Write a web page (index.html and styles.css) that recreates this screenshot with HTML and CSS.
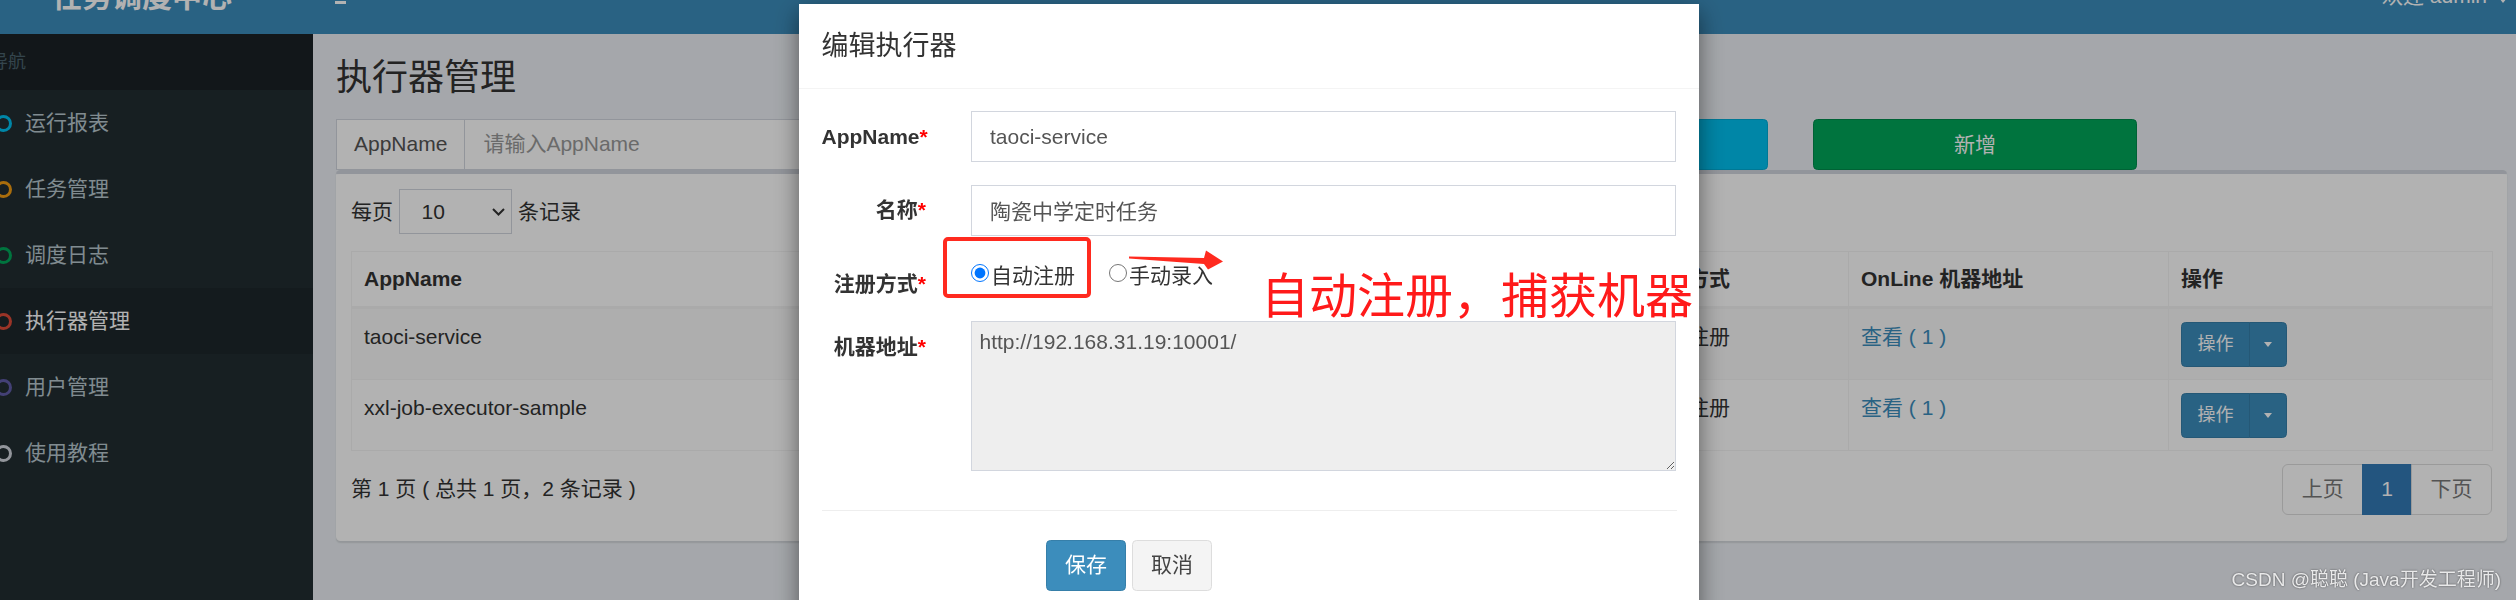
FILE: index.html
```html
<!DOCTYPE html>
<html lang="zh-CN">
<head>
<meta charset="utf-8">
<title>执行器管理</title>
<link rel="stylesheet" href="styles.css">
</head>
<body>
<div class="wrapper">
  <header class="main-header">
    <div class="logo"><span class="logo-text">任务调度中心</span></div>
    <nav class="navbar">
      <span class="toggle"><i></i><i></i><i></i></span>
      <span class="user">欢迎 admin<span class="caret user-caret"></span></span>
    </nav>
  </header>
  <div class="main">
    <aside class="sidebar">
      <div class="sidebar-header"><span>导航</span></div>
      <ul class="menu">
        <li><a><span class="ico aqua"></span><span class="menu-text">运行报表</span></a></li>
        <li><a><span class="ico yellow"></span><span class="menu-text">任务管理</span></a></li>
        <li><a><span class="ico green"></span><span class="menu-text">调度日志</span></a></li>
        <li class="active"><a><span class="ico red"></span><span class="menu-text">执行器管理</span></a></li>
        <li><a><span class="ico purple"></span><span class="menu-text">用户管理</span></a></li>
        <li><a><span class="ico gray"></span><span class="menu-text">使用教程</span></a></li>
      </ul>
    </aside>
    <section class="content">
      <h1 class="page-title">执行器管理</h1>
      <div class="toolbar">
        <div class="input-group"><span class="addon">AppName</span><span class="field">请输入AppName</span></div>
        <div class="input-group"><span class="addon">名称</span><span class="field">请输入名称</span></div>
        <span class="btn-wide btn-info">搜索</span>
        <span class="btn-wide btn-success">新增</span>
      </div>
      <div class="box">
        <div class="box-body">
          <div class="length">
            <span>每页</span>
            <div class="select"><span>10</span><svg class="chev" width="13" height="8" viewBox="0 0 13 8"><path d="M1 1l5.5 5.5L12 1" fill="none" stroke="#333" stroke-width="2"/></svg></div>
            <span>条记录</span>
          </div>
          <table class="table">
            <thead>
              <tr><th class="c-app">AppName</th><th class="c-name">名称</th><th class="c-type">注册方式</th><th class="c-online">OnLine 机器地址</th><th class="c-op">操作</th></tr>
            </thead>
            <tbody>
              <tr>
                <td>taoci-service</td><td>陶瓷中学定时任务</td><td>自动注册</td><td><a class="link">查看 ( 1 )</a></td>
                <td><div class="btn-group"><span class="btn-op">操作</span><span class="btn-drop"><span class="caret"></span></span></div></td>
              </tr>
              <tr>
                <td>xxl-job-executor-sample</td><td>示例执行器</td><td>自动注册</td><td><a class="link">查看 ( 1 )</a></td>
                <td><div class="btn-group"><span class="btn-op">操作</span><span class="btn-drop"><span class="caret"></span></span></div></td>
              </tr>
            </tbody>
          </table>
          <div class="table-foot">
            <span class="info">第 1 页 ( 总共 1 页，2 条记录 )</span>
            <ul class="pagination">
              <li>上页</li>
              <li class="active">1</li>
              <li>下页</li>
            </ul>
          </div>
        </div>
      </div>
    </section>
  </div>
</div>

<div class="backdrop"></div>

<div class="modal">
  <div class="modal-header"><h4 class="modal-title">编辑执行器</h4></div>
  <div class="modal-body">
    <div class="form-group">
      <label class="form-label">AppName<span class="req">*</span></label>
      <input class="form-control" type="text" value="taoci-service">
    </div>
    <div class="form-group">
      <label class="form-label">名称<span class="req">*</span></label>
      <input class="form-control" type="text" value="陶瓷中学定时任务">
    </div>
    <div class="form-group radio-row">
      <label class="form-label">注册方式<span class="req">*</span></label>
      <div class="radios">
        <label class="radio"><input type="radio" name="addressType" checked><span>自动注册</span></label>
        <label class="radio second"><input type="radio" name="addressType"><span>手动录入</span></label>
      </div>
    </div>
    <div class="form-group">
      <label class="form-label">机器地址<span class="req">*</span></label>
      <textarea class="form-area" readonly>http://192.168.31.19:10001/</textarea>
    </div>
    <hr class="divider">
    <div class="actions">
      <button class="btn btn-primary" type="button">保存</button>
      <button class="btn btn-default" type="button">取消</button>
    </div>
  </div>
  <div class="mark-box"></div>
  <svg class="mark-arrow" width="104" height="26" viewBox="0 0 104 26"><polygon points="4,8.5 79,10 81,2.5 98,13.5 83,21.5 79,16 4,10.5" fill="#ff2a1f"/></svg>
  <div class="mark-text">自动注册，捕获机器</div>
</div>

<div class="watermark">CSDN @聪聪 (Java开发工程师)</div>
</body>
</html>
```

FILE: styles.css
```css
* { box-sizing: border-box; }

html, body {
  margin: 0;
  height: 600px;
  overflow: hidden;
}

body {
  font-family: "Liberation Sans", "Noto Sans CJK SC", sans-serif;
  font-size: 21px;
  line-height: 30px;
  color: #333;
  background: #ecf0f5;
}

/* ---------- header ---------- */
.main-header {
  display: flex;
  height: 34px;
  background: #3c8dbc;
  overflow: hidden;
}

.logo {
  width: 313px;
  flex: none;
  padding-left: 52px;
}

.logo-text {
  display: block;
  margin-top: -18px;
  font-size: 30px;
  line-height: 30px;
  font-weight: 700;
  color: #fff;
  white-space: nowrap;
}

.navbar {
  flex: 1;
  display: flex;
  justify-content: space-between;
  align-items: flex-start;
}

.toggle {
  display: flex;
  flex-direction: column;
  gap: 4px;
  margin-left: 22px;
  margin-top: -13px;
}

.toggle i {
  display: block;
  width: 11px;
  height: 3px;
  background: #fff;
}

.user {
  display: flex;
  align-items: center;
  margin-top: -19px;
  margin-right: 9px;
  color: #fff;
  white-space: nowrap;
}

.caret {
  display: inline-block;
  width: 0;
  height: 0;
  border-top: 5px solid #fff;
  border-left: 4.5px solid transparent;
  border-right: 4.5px solid transparent;
}

.user-caret {
  margin-left: 12px;
  margin-top: 8px;
}

/* ---------- layout ---------- */
.main {
  display: flex;
  height: 566px;
}

.sidebar {
  width: 313px;
  flex: none;
  background: #222d32;
  overflow: hidden;
}

.sidebar-header {
  height: 56px;
  padding: 15px 0;
  background: #1a2226;
  color: #4b646f;
  font-size: 18px;
  line-height: 26px;
}

.sidebar-header span {
  display: block;
  margin-left: -10px;
}

.menu {
  list-style: none;
  margin: 0;
  padding: 0;
}

.menu a {
  display: flex;
  align-items: center;
  height: 66px;
  color: #b8c7ce;
  white-space: nowrap;
}

.menu li.active a {
  background: #1e282c;
  color: #fff;
}

.ico {
  flex: none;
  width: 17px;
  height: 17px;
  margin-left: -5px;
  border: 3px solid;
  border-radius: 50%;
}

.ico.aqua { border-color: #00c0ef; }
.ico.yellow { border-color: #f39c12; }
.ico.green { border-color: #00a65a; }
.ico.red { border-color: #dd4b39; }
.ico.purple { border-color: #605ca8; }
.ico.gray { border-color: #d2d6de; }

.menu-text { margin-left: 13px; }

/* ---------- content ---------- */
.content {
  flex: 1;
  min-width: 0;
  padding: 24px 9px 0 23px;
}

.page-title {
  margin: 0;
  font-size: 36px;
  line-height: 40px;
  font-weight: 400;
  color: #333;
}

.toolbar {
  display: flex;
  gap: 45px;
  margin-top: 21px;
}

.input-group {
  display: flex;
  flex: none;
  width: 509px;
  height: 51px;
}

.addon {
  flex: none;
  padding: 0 17px;
  border: 1.5px solid #d2d6de;
  background: #fff;
  color: #555;
  line-height: 48px;
  white-space: nowrap;
}

.field {
  flex: 1;
  padding-left: 18px;
  border: 1.5px solid #d2d6de;
  border-left: 0;
  background: #fff;
  color: #999;
  line-height: 48px;
  white-space: nowrap;
}

.btn-wide {
  flex: none;
  width: 324px;
  height: 51px;
  border: 1px solid;
  border-radius: 4.5px;
  color: #fff;
  text-align: center;
  line-height: 49px;
}

.btn-info { background: #00c0ef; border-color: #00acd6; }
.btn-success { background: #00a65a; border-color: #008d4c; }

.box {
  background: #fff;
  border-top: 4.5px solid #d2d6de;
  border-radius: 4.5px;
  box-shadow: 0 1.5px 1.5px rgba(0, 0, 0, 0.1);
}

.box-body {
  padding: 15px 15px 26px;
}

.length {
  display: flex;
  align-items: center;
  gap: 6px;
  height: 45px;
}

.select {
  display: flex;
  align-items: center;
  justify-content: space-between;
  width: 113px;
  height: 45px;
  padding: 0 6px 0 21.5px;
  border: 1.5px solid #d2d6de;
  background: #fff;
}

.chev { display: block; }

.table {
  width: 100%;
  margin-top: 16.5px;
  border-collapse: collapse;
  table-layout: fixed;
  border: 1px solid #f4f4f4;
}

.table th,
.table td {
  border: 1px solid #f4f4f4;
  padding: 12px;
  text-align: left;
  vertical-align: top;
  line-height: 30px;
  white-space: nowrap;
  overflow: hidden;
}

.table thead th {
  border-bottom: 3px solid #f4f4f4;
  font-weight: 700;
}

.table td {
  padding: 13.5px 12px 11.5px;
}

.table tbody tr:nth-child(odd) { background: #f9f9f9; }

.c-app { width: 749px; }
.c-name { width: 533px; }
.c-type { width: 215px; }
.c-online { width: 320px; }
.c-op { width: 324px; }

.link { color: #3c8dbc; }

.btn-group {
  display: inline-flex;
  height: 45px;
}

.btn-op {
  width: 69px;
  height: 45px;
  border: 1.5px solid #367fa9;
  border-radius: 4.5px 0 0 4.5px;
  background: #3c8dbc;
  color: #fff;
  font-size: 18px;
  line-height: 42px;
  text-align: center;
}

.btn-drop {
  display: flex;
  align-items: center;
  justify-content: center;
  width: 38px;
  height: 45px;
  margin-left: -1.5px;
  border: 1.5px solid #367fa9;
  border-radius: 0 4.5px 4.5px 0;
  background: #3c8dbc;
}

.table-foot {
  display: flex;
  justify-content: space-between;
  align-items: center;
  margin-top: 13px;
}

.pagination {
  display: flex;
  list-style: none;
  margin: 0;
  padding: 0;
}

.pagination li {
  height: 51px;
  padding: 0 18.5px;
  margin-left: -1.5px;
  border: 1.5px solid #ddd;
  background: #fff;
  color: #777;
  line-height: 48px;
}

.pagination li:first-child { border-radius: 6px 0 0 6px; }
.pagination li:last-child { border-radius: 0 6px 6px 0; }

.pagination li.active {
  background: #337ab7;
  border-color: #337ab7;
  color: #fff;
}

/* ---------- modal ---------- */
.backdrop {
  position: fixed;
  inset: 0;
  background: rgba(0, 0, 0, 0.3);
}

.modal {
  position: fixed;
  left: 799px;
  top: 4px;
  width: 900px;
  height: 640px;
  background: #fff;
  box-shadow: 0 7.5px 22.5px rgba(0, 0, 0, 0.5);
}

.modal-header {
  padding: 22.5px;
  border-bottom: 1.5px solid #f4f4f4;
}

.modal-title {
  margin: 0;
  font-size: 27px;
  line-height: 38.5px;
  font-weight: 400;
  color: #333;
}

.modal-body {
  padding: 22.5px;
}

.form-group {
  display: grid;
  grid-template-columns: 104.5px 705px;
  column-gap: 45px;
  margin-bottom: 22.5px;
}

.form-label {
  padding-top: 10.5px;
  text-align: right;
  font-weight: 700;
  line-height: 30px;
  white-space: nowrap;
}

.req {
  color: #f00;
}

.form-control {
  width: 100%;
  height: 51px;
  margin: 0;
  padding: 0 18px;
  border: 1.5px solid #d2d6de;
  border-radius: 0;
  font: inherit;
  color: #555;
  outline: none;
}

.radio-row .radios {
  display: flex;
  align-items: flex-start;
  height: 40.5px;
  padding-top: 3px;
}

.radio {
  display: inline-flex;
  align-items: center;
  line-height: 30px;
  color: #333;
}

.radio input {
  width: 18px;
  height: 18px;
  margin: 0 2px 6px 0;
}

.radio.second { margin-left: 34px; }

.form-area {
  width: 100%;
  height: 150px;
  margin: 0;
  padding: 4.5px 7.5px;
  border: 1.5px solid #d2d6de;
  border-radius: 0;
  background: #eee;
  font: inherit;
  line-height: 30px;
  color: #555;
  outline: none;
}

.divider {
  margin: 39px 0 28.5px;
  border: 0;
  border-top: 1.5px solid #eee;
}

.actions {
  display: flex;
  gap: 6px;
  margin-left: 224.5px;
}

.btn {
  height: 51px;
  margin: 0;
  padding: 0 18px;
  border: 1.5px solid;
  border-radius: 4.5px;
  font: inherit;
  line-height: 48px;
}

.btn-primary {
  background: #3c8dbc;
  border-color: #367fa9;
  color: #fff;
}

.btn-default {
  background: #f4f4f4;
  border-color: #ddd;
  color: #444;
}

/* ---------- annotations ---------- */
.mark-box {
  position: absolute;
  left: 144px;
  top: 233px;
  width: 148px;
  height: 61px;
  border: 4.5px solid #ff2a1f;
  border-radius: 5px;
}

.mark-arrow {
  position: absolute;
  left: 326px;
  top: 244px;
}

.mark-text {
  position: absolute;
  left: 462px;
  top: 264px;
  font-family: "Noto Sans CJK SC", sans-serif;
  font-size: 48px;
  line-height: 48px;
  color: #ff1a1a;
  white-space: nowrap;
}

.watermark {
  position: fixed;
  right: 15px;
  bottom: 7px;
  font-size: 19px;
  line-height: 26px;
  color: rgba(255, 255, 255, 0.85);
  text-shadow: 0 0 2px rgba(0, 0, 0, 0.6);
  white-space: nowrap;
}
```
